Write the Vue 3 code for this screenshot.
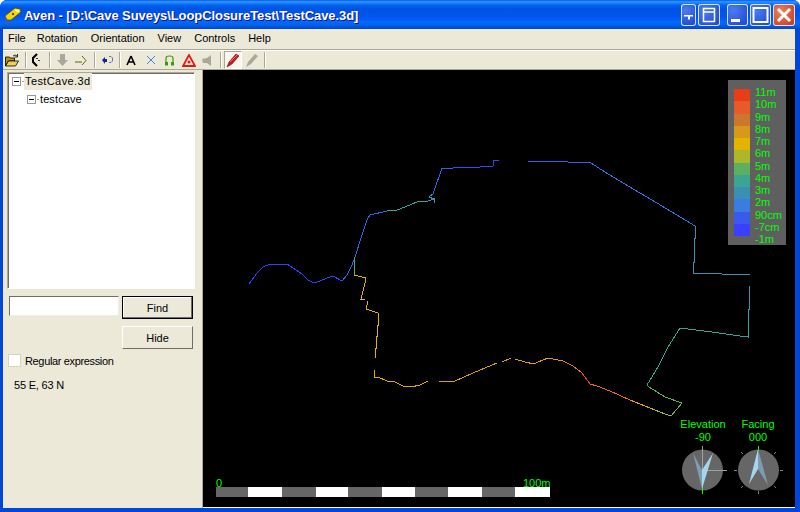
<script setup>
const menus = ['File', 'Rotation', 'Orientation', 'View', 'Controls', 'Help']
const legend = [
  { label: '11m', color: '#e83e18' }, { label: '10m', color: '#e85a28' }, { label: '9m', color: '#cd772c' },
  { label: '8m', color: '#d8981a' }, { label: '7m', color: '#e2b400' }, { label: '6m', color: '#aeb62a' },
  { label: '5m', color: '#5cb060' }, { label: '4m', color: '#3aa590' }, { label: '3m', color: '#3a8fb4' },
  { label: '2m', color: '#3a7ce0' }, { label: '90cm', color: '#3a5aee' }, { label: '-7cm', color: '#3a40ff' }
]
const scaleEdges = [216, 248, 282, 316, 348, 382, 415, 448, 482, 515, 550]
const scale = scaleEdges.slice(0, -1).map((x, i) => ({ x, w: scaleEdges[i + 1] - x, fill: i % 2 ? '#fff' : '#666' }))
const lines = [
  ['#3340ff', '249,284 257,273 263,267 270,264 287,264 293,268 302,274 308,280 314,283 320,281 327,278 333,276 342,281'],
  ['#3a60e8', '342,281 347,275 352,265 355,257 362,235 367,220 370,215 387,211'],
  ['#3aa590', '387,211 397,210 405,207 417,202 428,201'],
  ['#3a8fb4', '428,201 434,199 434,203'],
  ['#3a8fb4', '434,199 429,197 433,194'],
  ['#3a60e8', '433,194 442,168 453,168'],
  ['#3346f8', '453,168 480,167 493,166 493,161 499,160'],
  ['#3a5af0', '527,161 568,162 591,163'],
  ['#3a70e4', '591,163 605,172 623,183 657,203 695,226'],
  ['#3a8fb4', '695,226 695,238 694,238 694,262 693,262 693,273 722,274 750,274'],
  ['#3a8fb4', '749,286 749,309 748,309'],
  ['#3a9fa0', '748,309 748,337 740,336'],
  ['#3aa590', '740,336 712,332 688,329 680,328 668,347 658,367 647,385 649,387'],
  ['#5cb060', '649,387 665,397 682,403 671,416'],
  ['#aeb62a', '671,416 665,414 650,408'],
  ['#e2a000', '650,408 630,400'],
  ['#e86a20', '630,400 610,391 597,386 590,384'],
  ['#e84a20', '590,384 582,373'],
  ['#e07828', '582,373 573,366 563,361'],
  ['#e0a000', '563,361 548,358 538,362 534,364 525,362 515,359'],
  ['#d8981a', '511,358 502,362'],
  ['#d8981a', '497,363 473,373 455,381'],
  ['#e2a000', '455,381 439,381'],
  ['#e2a800', '428,381 420,385 411,387 403,386 395,382 387,381 378,377 374,377 374,370'],
  ['#e2b400', '375,358 375,348 376,348 376,336 377,336 377,325 378,325 378,313 366,309 368,301'],
  ['#e2b400', '365,299 361,299 365,283 366,278 354,275'],
  ['#5cb060', '354,275 354,268'],
  ['#3aa590', '354,268 354,257']
]
</script>

<template>
  <div class="window">
    <header class="titlebar">
      <svg class="app-icon" width="18" height="18" viewBox="0 0 18 18">
        <path d="M1 10 L11 2 L16 3 L17 6 L7 14 L3 14 Z" fill="#f5d800" stroke="#5a4a00" stroke-width=".8" />
        <path d="M11 3 L15 4 L15 6 L12 6 Z" fill="#fff6a0" />
        <circle cx="9" cy="8" r="1.2" fill="#5a4a00" />
        <path d="M1 14 L6 17 M3 17 L5 14" stroke="#d83020" stroke-width="1" stroke-dasharray="1 1" fill="none" />
      </svg>
      <span class="title">Aven - [D:\Cave Suveys\LoopClosureTest\TestCave.3d]</span>
      <div class="caption-buttons">
        <span class="cap cap-narrow">
          <svg width="15" height="22" viewBox="0 0 15 22"><path d="M3 11h9v1.500h-3v3h-2v-3h-4z" fill="#fff" /></svg>
        </span>
        <span class="cap cap-roll">
          <svg width="22" height="22" viewBox="0 0 22 22"><path d="M5.500 4.500h11v13h-11zM5.500 8h11" fill="none" stroke="#fff" stroke-width="1.500" /></svg>
        </span>
        <span class="cap cap-min">
          <svg width="21" height="22" viewBox="0 0 21 22"><rect x="4" y="15" width="9" height="3" fill="#fff" /></svg>
        </span>
        <span class="cap cap-max">
          <svg width="21" height="22" viewBox="0 0 21 22"><rect x="3.500" y="4" width="14" height="14" fill="none" stroke="#fff" stroke-width="2" /></svg>
        </span>
        <span class="cap cap-close">
          <svg width="22" height="22" viewBox="0 0 22 22"><path d="M5 5l12 12M17 5L5 17" stroke="#fff" stroke-width="3" fill="none" /></svg>
        </span>
      </div>
    </header>

    <div class="client">
      <nav class="menubar">
        <span v-for="m in menus" :key="m">{{ m }}</span>
      </nav>

      <div class="toolbar">
        <svg class="t-open" width="14" height="13" viewBox="0 0 14 13">
          <path d="M.5 3h4l1 1h4v3h-6l-3 5z" fill="#b89018" stroke="#000" stroke-width=".8" />
          <path d="M.5 12l3-5h10l-3 5z" fill="#f0d050" stroke="#000" stroke-width=".8" />
          <path d="M8 2q2-2 4 0M12.500 0v3h-3" fill="none" stroke="#000" stroke-width=".8" />
        </svg>
        <i class="sep s1"></i>
        <svg class="t-rot" width="10" height="14" viewBox="0 0 10 14">
          <path d="M6 1L2 5v4l4 4" fill="none" stroke="#000" stroke-width="2" />
          <path d="M6 5v1M8 7v1" stroke="#000" stroke-width="1.500" />
        </svg>
        <i class="sep s2"></i>
        <svg class="t-down" width="11" height="12" viewBox="0 0 11 12"><path d="M3 0h5v6h3l-5.500 6L0 6h3z" fill="#aca899" /></svg>
        <svg class="t-right" width="12" height="11" viewBox="0 0 12 11">
          <path d="M1 4h6V1l4 4.500L7 10V7H1z" fill="#f5eeb8" />
          <path d="M7 1l4 4.500L7 10M0 7h7" fill="none" stroke="#333" stroke-width=".8" />
        </svg>
        <i class="sep s3"></i>
        <svg class="t-undo" width="11" height="8" viewBox="0 0 11 8">
          <path d="M0 4l3-3v2h2v3H3v2z" fill="#0a2a90" />
          <path d="M7 .500h2l1.500 1.500v3L9 6.500H7" fill="none" stroke="#5a78c0" />
        </svg>
        <i class="sep s4"></i>
        <svg class="t-a" width="10" height="11" viewBox="0 0 10 11"><path d="M5 1L1 10M5 1l4 9M2.500 7h5" stroke="#000" stroke-width="1.600" fill="none" /></svg>
        <svg class="t-x" width="10" height="10" viewBox="0 0 10 10"><path d="M1 1l8 8M9 1L1 9" stroke="#4a80e8" stroke-width="1" fill="none" /></svg>
        <svg class="t-o" width="11" height="11" viewBox="0 0 11 11">
          <path d="M2 9V3q0-2 3.500-2T9 3v6" stroke="#3a9a10" stroke-width="1.200" fill="none" />
          <path d="M1 7h3v3.500H1zM7 7h3v3.500H7z" fill="#3a9a10" />
        </svg>
        <svg class="t-tri" width="14" height="13" viewBox="0 0 14 13">
          <path d="M7 1L1 12h12z" fill="none" stroke="#e81810" stroke-width="1.800" />
          <circle cx="7" cy="8" r="1.500" fill="#e81810" />
        </svg>
        <svg class="t-sound" width="11" height="11" viewBox="0 0 11 11"><path d="M0 4l5-1 4-3v11L5 8H1z" fill="#aca899" /></svg>
        <i class="sep s5"></i>
        <span class="t-pressed">
          <svg width="14" height="15" viewBox="0 0 14 15">
            <path d="M1 14l2-5 7-8 3 2-7 8z" fill="#d01818" stroke="#801010" stroke-width=".6" />
            <path d="M4 9l7-7" stroke="#f07070" stroke-width="1" />
          </svg>
        </span>
        <svg class="t-pen" width="14" height="15" viewBox="0 0 14 15">
          <path d="M1 14l2-5 7-8 3 2-7 8z" fill="#aca899" />
        </svg>
        <i class="sep s6"></i>
      </div>

      <main class="main">
        <aside class="side">
          <div class="tree">
            <div class="node">
              <span class="exp"></span><span class="dots"></span><span class="node-label root-label selected">TestCave.3d</span>
            </div>
            <div class="node child">
              <span class="exp"></span><span class="dots"></span><span class="node-label">testcave</span>
            </div>
          </div>
          <div class="find-row">
            <input class="search" type="text" />
            <button class="btn default">Find</button>
          </div>
          <div class="hide-row">
            <button class="btn">Hide</button>
          </div>
          <label class="regex"><span class="check"></span>Regular expression</label>
          <div class="coords">55 E, 63 N</div>
        </aside>

        <div class="view">
          <svg class="scene" width="592" height="437" viewBox="203 70 592 437">
            <polyline v-for="(l, i) in lines" :key="i" :points="l[1]" :stroke="l[0]" fill="none" shape-rendering="crispEdges" />

            <rect x="728" y="80" width="58" height="165" fill="#5f5f5f" />
            <rect v-for="(c, i) in legend" :key="c.label" x="734" :y="89 + i * 12.25" width="16" height="12.250" :fill="c.color" shape-rendering="crispEdges" />
            <text v-for="(c, i) in legend" :key="'t' + c.label" class="gl" x="755" :y="96 + i * 12.25">{{ c.label }}</text>
            <text class="gl" x="755" y="243">-1m</text>

            <rect v-for="s in scale" :key="s.x" :x="s.x" y="487" :width="s.w" height="10" :fill="s.fill" />
            <text class="gl" x="216" y="487">0</text>
            <text class="gl" x="523" y="487">100m</text>

            <text class="gl" x="703" y="428" text-anchor="middle">Elevation</text>
            <text class="gl" x="703" y="441" text-anchor="middle">-90</text>
            <text class="gl" x="758" y="428" text-anchor="middle">Facing</text>
            <text class="gl" x="758" y="441" text-anchor="middle">000</text>

            <circle cx="702.500" cy="470" r="20.500" fill="#666" />
            <path d="M702.500 446V490M702.500 470.500H727" stroke="#a0a0a0" fill="none" shape-rendering="crispEdges" />
            <path d="M702.500 488V494" stroke="#00ff00" shape-rendering="crispEdges" />
            <polygon points="693,453 702,470 702,489" fill="#7d9cb2" />
            <polygon points="713,453 702,470 702,489" fill="#a6d6ec" />

            <circle cx="758.500" cy="470" r="20.500" fill="#666" />
            <path d="M758.500 446V452" stroke="#00ff00" shape-rendering="crispEdges" />
            <path d="M758.500 491V494M734 470.500H737M780 470.500H783M741 452l2 2M776 452l-2 2M741 488l2-2M776 488l-2-2" stroke="#808080" fill="none" />
            <polygon points="758,449 749,484 758,469" fill="#a6d6ec" />
            <polygon points="758,449 768,485 758,469" fill="#7d9cb2" />
          </svg>
        </div>
      </main>
    </div>
  </div>
</template>

<style>
html, body { margin: 0; padding: 0; overflow: hidden; }
</style>

<style scoped>
.window {
  width: 800px;
  height: 512px;
  box-sizing: border-box;
  display: flex;
  flex-direction: column;
  background: #0046d8;
  border-radius: 7px 7px 0 0;
  padding-bottom: 4px;
  overflow: hidden;
  font-family: "Liberation Sans", Arial, sans-serif;
  font-size: 11px;
  color: #000;
}
.titlebar {
  height: 29px;
  flex: none;
  display: flex;
  align-items: center;
  padding: 0 5px 0 4px;
  background: linear-gradient(#0058ee 0%, #3593ff 6%, #127dff 12%, #0262ee 18%, #0054e3 30%, #0055eb 56%, #005bf5 66%, #026afe 76%, #0062ef 86%, #0052d6 94%, #0046c8 100%);
}
.app-icon { flex: none; margin-right: 2px; margin-top: 1px; }
.title {
  color: #fff;
  font-weight: bold;
  font-size: 13px;
  letter-spacing: -.07px;
  white-space: nowrap;
  text-shadow: 1px 1px #0f1089;
  padding-top: 2px;
}
.caption-buttons { margin-left: auto; display: flex; align-items: center; height: 22px; margin-top: 1px; }
.cap {
  display: block;
  height: 22px;
  box-sizing: border-box;
  border-radius: 3px;
  box-shadow: inset 0 0 0 1px #d8e4fa;
  background: radial-gradient(circle at 30% 30%, #4c7cf0, #2450d8 75%, #1c40c0);
}
.cap svg { display: block; }
.cap-narrow { width: 15px; }
.cap-roll { width: 22px; margin-left: 2px; margin-right: 7px; }
.cap-min { width: 21px; }
.cap-max { width: 21px; margin: 0 2px; }
.cap-close { width: 22px; background: radial-gradient(circle at 35% 35%, #e8805c, #d4482a 70%, #b83418); }

.client {
  flex: 1;
  min-height: 0;
  margin: 0 5px 0 3px;
  background: #ece9d8;
  display: flex;
  flex-direction: column;
}
.menubar {
  height: 21px;
  flex: none;
  box-sizing: border-box;
  display: flex;
  align-items: center;
  gap: 13px;
  padding: 0 0 2px 5px;
  border-bottom: 1px solid #aca899;
}
.menubar span:first-child { margin-right: -2px; }
.toolbar {
  height: 20px;
  flex: none;
  box-sizing: border-box;
  display: flex;
  align-items: center;
  border-top: 1px solid #fff;
  border-bottom: 1px solid #aca899;
}
.sep { display: block; width: 1px; height: 16px; background: #aca899; box-shadow: 1px 0 #fff; flex: none; }
.toolbar svg { display: block; flex: none; }
.t-open { margin-left: 2px; }
.s1 { margin-left: 6px; }
.t-rot { margin-left: 5px; }
.s2 { margin-left: 8px; }
.t-down { margin-left: 7px; }
.t-right { margin-left: 7px; }
.s3 { margin-left: 7px; }
.t-undo { margin-left: 7px; }
.s4 { margin-left: 6px; }
.t-a { margin-left: 6px; }
.t-x { margin-left: 10px; }
.t-o { margin-left: 8px; }
.t-tri { margin-left: 7px; }
.t-sound { margin-left: 6px; }
.s5 { margin-left: 7px; }
.t-pressed {
  width: 18px;
  height: 18px;
  margin-left: 3px;
  box-sizing: border-box;
  display: flex;
  align-items: center;
  justify-content: center;
  border: 1px solid;
  border-color: #aca899 #fff #fff #aca899;
  background: #f7f6ef;
}
.t-pen { margin-left: 3px; }
.s6 { margin-left: 5px; }

.main { flex: 1; min-height: 0; display: flex; }
.side {
  width: 200px;
  flex: none;
  box-sizing: border-box;
  border-right: 1px solid #aca899;
  padding: 2px 7px 0 4px;
}
.tree {
  height: 217px;
  box-sizing: border-box;
  background: #fff;
  border: 1px solid;
  border-color: #aca899 #fff #fff #aca899;
  box-shadow: inset 1px 1px #716f64;
  padding: 0 0 0 4px;
}
.node { height: 17px; display: flex; align-items: center; }
.child { margin-left: 15px; margin-top: 1px; }
.exp {
  width: 9px;
  height: 9px;
  box-sizing: border-box;
  border: 1px solid #919b9c;
  background: linear-gradient(#000, #000) center / 5px 1px no-repeat #fff;
  flex: none;
}
.dots { width: 2px; height: 1px; margin-left: 1px; background: #a0a0a0; flex: none; }
.node-label { padding: 0 1px; line-height: 17px; letter-spacing: .1px; }
.root-label { letter-spacing: .4px; }
.selected { background: #ece9d8; }
.find-row { display: flex; align-items: flex-start; margin-top: 7px; padding-left: 2px; }
.search {
  width: 110px;
  height: 20px;
  box-sizing: border-box;
  margin: 0;
  padding: 0;
  background: #fff;
  border: 1px solid;
  border-color: #716f64 #f1efe2 #f1efe2 #716f64;
  outline: none;
}
.btn {
  width: 71px;
  height: 23px;
  margin: 0 0 0 3px;
  padding: 0;
  box-sizing: border-box;
  background: #ece9d8;
  font: inherit;
  color: #000;
  border: 1px solid;
  border-color: #fff #716f64 #716f64 #fff;
}
.btn.default { border: 1px solid #000; box-shadow: inset -1px -1px #716f64, inset 1px 1px #fff; }
.hide-row { display: flex; justify-content: flex-end; margin-top: 7px; padding-right: 2px; }
.regex { display: flex; align-items: center; margin-top: 5px; padding-left: 1px; height: 13px; letter-spacing: -.35px; }
.check {
  width: 13px;
  height: 13px;
  box-sizing: border-box;
  margin-right: 4px;
  background: #fff;
  border: 1px solid #d8d4c0;
  flex: none;
}
.coords { margin-top: 12px; padding-left: 7px; letter-spacing: -.2px; }

.view { flex: 1; min-width: 0; background: #000; border-bottom: 1px solid #fff; overflow: hidden; }
.scene { display: block; }
.gl { fill: #00ff00; font-family: "Liberation Sans", Arial, sans-serif; font-size: 11px; }
</style>
